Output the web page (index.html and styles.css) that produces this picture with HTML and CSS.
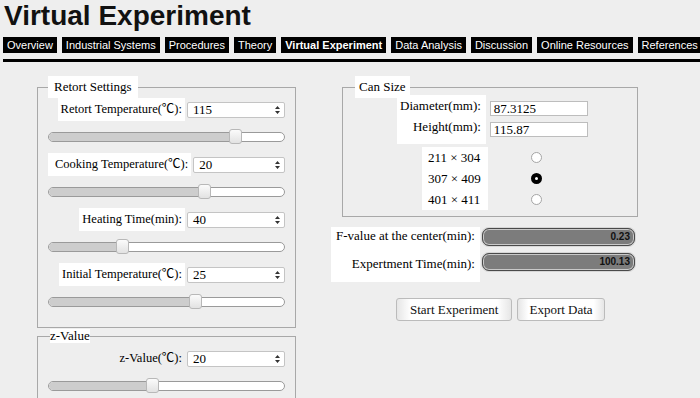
FILE: index.html
```html
<!DOCTYPE html>
<html lang="en">
<head>
  <meta charset="UTF-8">
  <meta name="viewport" content="width=device-width, initial-scale=1.0">
  <title>Virtual Experiment</title>
  <link rel="stylesheet" href="styles.css">
</head>
<body>

  <h1 class="page-title">Virtual Experiment</h1>

  <nav class="tabs">
    <a class="tab">Overview</a>
    <a class="tab">Industrial Systems</a>
    <a class="tab">Procedures</a>
    <a class="tab">Theory</a>
    <a class="tab active">Virtual Experiment</a>
    <a class="tab">Data Analysis</a>
    <a class="tab">Discussion</a>
    <a class="tab">Online Resources</a>
    <a class="tab">References</a>
  </nav>
  <div class="rule"></div>

  <div class="main">
    <div class="col-left">
      <fieldset class="box box-retort">
        <legend>Retort Settings</legend>

        <div class="group">
          <div class="row">
            <label>Retort Temperature(℃):</label>
            <div class="select"><span>115</span><svg width="5" height="10" viewBox="0 0 5 10"><path d="M0 4 2.5 1 5 4zM0 6 2.5 9 5 6z" fill="#333"/></svg></div>
          </div>
          <div class="slider"><div class="fill" style="width:79.3%"><span class="thumb"></span></div></div>
        </div>

        <div class="group">
          <div class="row">
            <label class="wide">Cooking Temperature(℃):</label>
            <div class="select"><span>20</span><svg width="5" height="10" viewBox="0 0 5 10"><path d="M0 4 2.5 1 5 4zM0 6 2.5 9 5 6z" fill="#333"/></svg></div>
          </div>
          <div class="slider"><div class="fill" style="width:65.8%"><span class="thumb"></span></div></div>
        </div>

        <div class="group">
          <div class="row">
            <label>Heating Time(min):</label>
            <div class="select"><span>40</span><svg width="5" height="10" viewBox="0 0 5 10"><path d="M0 4 2.5 1 5 4zM0 6 2.5 9 5 6z" fill="#333"/></svg></div>
          </div>
          <div class="slider"><div class="fill" style="width:31.2%"><span class="thumb"></span></div></div>
        </div>

        <div class="group">
          <div class="row">
            <label>Initial Temperature(℃):</label>
            <div class="select"><span>25</span><svg width="5" height="10" viewBox="0 0 5 10"><path d="M0 4 2.5 1 5 4zM0 6 2.5 9 5 6z" fill="#333"/></svg></div>
          </div>
          <div class="slider"><div class="fill" style="width:62%"><span class="thumb"></span></div></div>
        </div>
      </fieldset>

      <fieldset class="box box-z">
        <legend>z-Value</legend>
        <div class="group">
          <div class="row">
            <label class="plain">z-Value(℃):</label>
            <div class="select"><span>20</span><svg width="5" height="10" viewBox="0 0 5 10"><path d="M0 4 2.5 1 5 4zM0 6 2.5 9 5 6z" fill="#333"/></svg></div>
          </div>
          <div class="slider"><div class="fill" style="width:43.9%"><span class="thumb"></span></div></div>
        </div>
      </fieldset>
    </div>

    <div class="col-right">
      <fieldset class="box box-can">
        <legend>Can Size</legend>

        <div class="dims">
          <div class="dims-labels">
            <span>Diameter(mm):</span>
            <span>Height(mm):</span>
          </div>
          <div class="dims-inputs">
            <div class="textbox">87.3125</div>
            <div class="textbox">115.87</div>
          </div>
        </div>

        <div class="sizes">
          <div class="size-labels">
            <span>211 × 304</span>
            <span>307 × 409</span>
            <span>401 × 411</span>
          </div>
          <div class="size-radios">
            <span class="radio"></span>
            <span class="radio checked"></span>
            <span class="radio"></span>
          </div>
        </div>
      </fieldset>

      <div class="outputs">
        <div class="out-labels">
          <span>F-value at the center(min):</span>
          <span>Expertment Time(min):</span>
        </div>
        <div class="out-bars">
          <div class="bar">0.23</div>
          <div class="bar">100.13</div>
        </div>
      </div>

      <div class="actions">
        <button class="btn">Start Experiment</button>
        <button class="btn btn-narrow">Export Data</button>
      </div>
    </div>
  </div>

</body>
</html>
```

FILE: styles.css
```css
body {
  margin: 0;
  background-color: #eeeeee;
  font-family: "Liberation Serif", "Noto Sans CJK SC", serif;
  font-size: 13px;
  color: #000;
  overflow: hidden;
}

.page-title {
  margin: 0;
  padding-left: 4px;
  font-family: "Liberation Sans", Arial, sans-serif;
  font-size: 28px;
  line-height: 32px;
  font-weight: bold;
  color: #111;
}

.tabs {
  display: flex;
  gap: 5px;
  margin-top: 5px;
  padding-left: 3px;
}

.tab {
  background-color: #000;
  color: #fff;
  font-family: "Liberation Sans", Arial, sans-serif;
  font-size: 11px;
  line-height: 16px;
  padding: 0 4px;
  white-space: nowrap;
}

.tab.active {
  font-weight: bold;
}

.rule {
  margin: 6px 0 0 3px;
  border-top: 3px solid #000;
}

.main {
  display: grid;
  grid-template-columns: 259px 307px;
  column-gap: 35px;
  padding-left: 37px;
  margin-top: 14px;
}

.col-left,
.col-right {
  display: flex;
  flex-direction: column;
}

.box {
  margin: 0;
  padding: 0 10px 6px 10px;
  border: 1px solid #a8a8a8;
  min-width: 0;
}

.box legend {
  background-color: #fff;
  padding: 4px 6px;
  font-family: "Liberation Serif", serif;
  font-size: 13px;
  line-height: 14px;
}

.box-retort {
  padding-bottom: 9px;
}

.group {
  padding-bottom: 9px;
}

.row {
  display: flex;
  justify-content: flex-end;
  align-items: center;
  gap: 2px;
}

.row label {
  background-color: #fff;
  padding: 4px 3px;
  font-size: 12.5px;
  line-height: 15px;
  white-space: nowrap;
}

.row label.wide {
  padding-left: 7px;
}

.row label.plain {
  background-color: transparent;
}

.select {
  width: 98px;
  height: 16px;
  box-sizing: border-box;
  border: 1px solid #c4c4c4;
  border-radius: 2px;
  background-color: #fff;
  display: flex;
  align-items: center;
  justify-content: space-between;
  padding: 0 4px 0 5px;
  line-height: 14px;
}

.slider {
  height: 10px;
  margin: 11px 0 2px;
  box-sizing: border-box;
  border: 1px solid #9a9a9a;
  border-radius: 5px;
  background-color: #fff;
}

.fill {
  position: relative;
  height: 100%;
  background-color: #cdcdcd;
  border-radius: 4px 0 0 4px;
}

.thumb {
  position: absolute;
  right: -7px;
  top: -4px;
  width: 13px;
  height: 15px;
  box-sizing: border-box;
  border: 1px solid #b8b8b8;
  border-radius: 3px;
  background: linear-gradient(#fbfbfb, #e2e2e2);
}

.box-z {
  margin-top: 1px;
  padding-top: 4px;
}

.box-z legend {
  padding: 0;
  margin-left: 2px;
}

.box-can {
  margin-left: 11px;
  padding: 0 10px 6px 12px;
}

.box-can legend {
  padding: 4px 4px;
}

.dims {
  display: flex;
  gap: 4px;
  margin-top: -3px;
  padding-left: 42px;
}

.dims-labels {
  display: flex;
  flex-direction: column;
  align-items: flex-end;
  background-color: #fff;
  padding: 0 5px 7px 3px;
  line-height: 21px;
}

.dims-inputs {
  display: flex;
  flex-direction: column;
  gap: 6px;
  padding-top: 6px;
}

.textbox {
  width: 98px;
  height: 15px;
  box-sizing: border-box;
  border: 1px solid #bdbdbd;
  background-color: #fff;
  padding-left: 3px;
  line-height: 14px;
}

.sizes {
  display: flex;
  margin-top: 3px;
  padding-left: 67px;
}

.size-labels {
  display: flex;
  flex-direction: column;
  background-color: #fff;
  padding: 0 7px 0 6px;
  line-height: 21px;
}

.size-radios {
  display: flex;
  flex-direction: column;
  margin-left: 43px;
}

.radio {
  width: 11px;
  height: 11px;
  margin: 5px 0;
  box-sizing: border-box;
  border: 1px solid #a5a5a5;
  border-radius: 50%;
  background-color: #fff;
}

.radio.checked {
  border: 4px solid #000;
}

.outputs {
  display: flex;
  align-items: flex-start;
  margin-top: 10px;
}

.out-labels {
  display: flex;
  flex-direction: column;
  align-items: flex-end;
  gap: 10px;
  background-color: #fff;
  padding: 0 5px 9px 5px;
  line-height: 18px;
}

.out-bars {
  display: flex;
  flex-direction: column;
  gap: 7px;
  margin-left: 2px;
  padding-top: 1px;
}

.bar {
  width: 153px;
  height: 18px;
  box-sizing: border-box;
  border: 1px solid #4a4a4a;
  border-radius: 7px;
  box-shadow: inset 0 0 0 1px #c9c9c9, 0 0 0 1px #d6d6d6;
  background-color: #7c7c7c;
  text-align: right;
  padding-right: 4px;
  font-family: "Liberation Sans", Arial, sans-serif;
  font-size: 10px;
  font-weight: bold;
  line-height: 16px;
  color: #111;
}

.actions {
  display: flex;
  gap: 5px;
  margin-top: 16px;
  padding-left: 65px;
}

.btn {
  height: 23px;
  padding: 0 13px;
  border: 1px solid #bbb;
  border-radius: 3px;
  background: linear-gradient(to right, #e6e6e6, #fff 12%, #fff 88%, #e6e6e6);
  font-family: "Liberation Serif", serif;
  font-size: 13px;
  color: #111;
}

.btn-narrow {
  padding: 0 11px;
}
```
